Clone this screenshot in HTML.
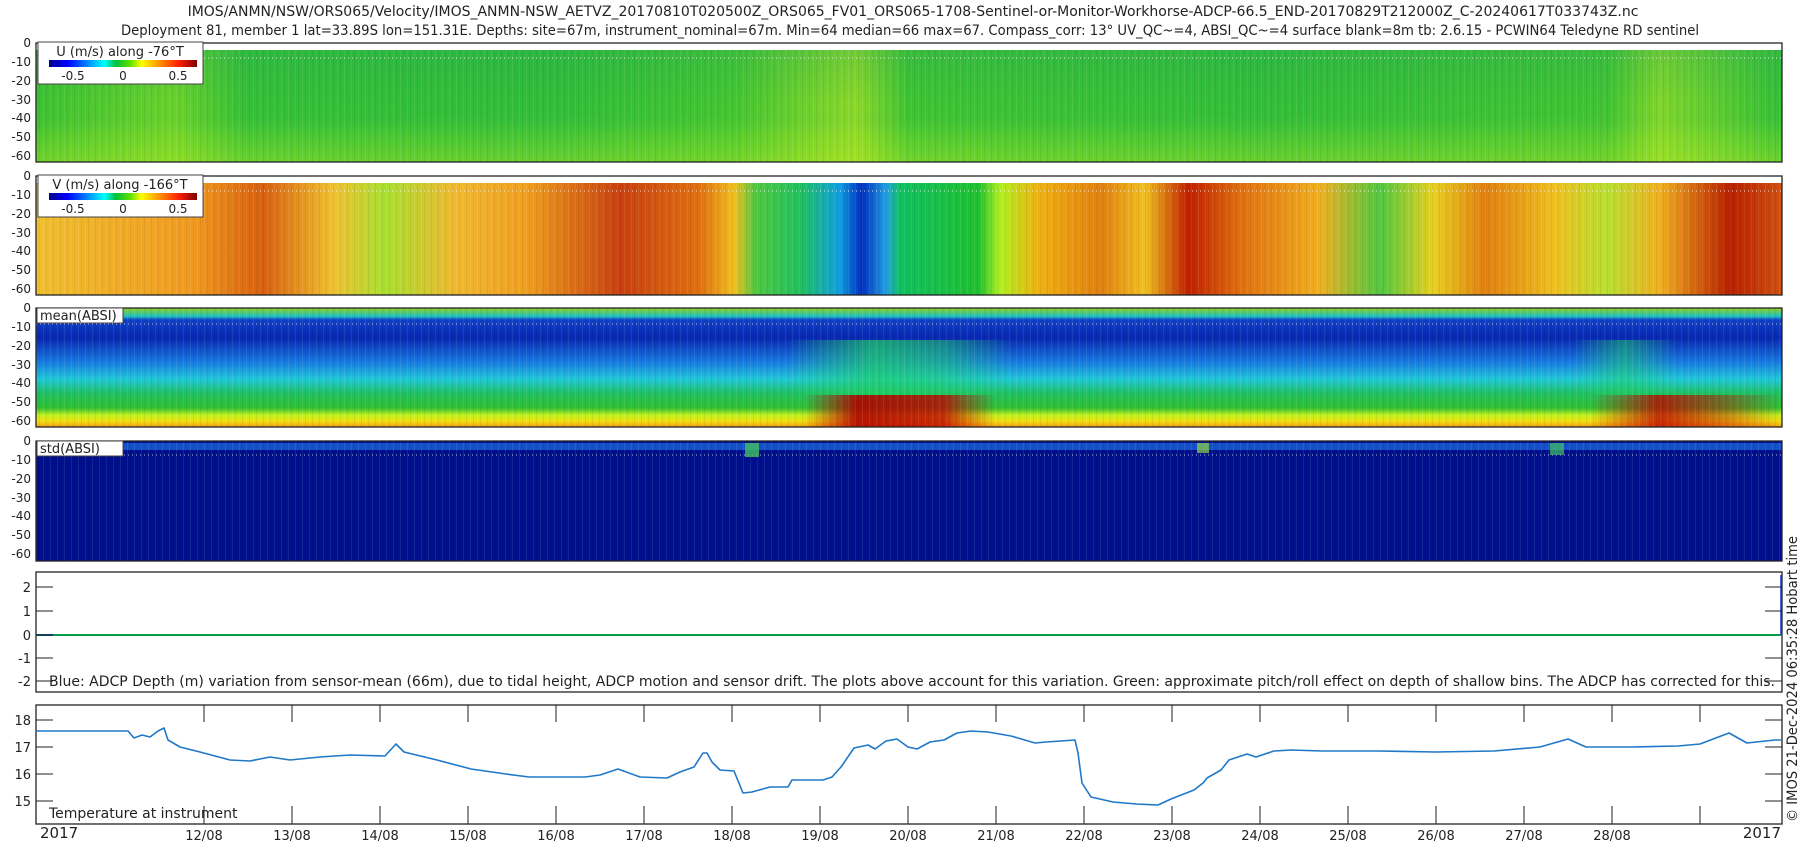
<!DOCTYPE html>
<html><head><meta charset="utf-8"><style>
html,body{margin:0;padding:0;background:#fff;width:1800px;height:850px;overflow:hidden}
svg{display:block}
text{font-family:"DejaVu Sans","Liberation Sans",sans-serif;fill:#222}
</style></head><body>
<svg width="1800" height="850" viewBox="0 0 1800 850" xmlns="http://www.w3.org/2000/svg">
<defs>
<linearGradient id="jet" x1="0" x2="1" y1="0" y2="0">
<stop offset="0" stop-color="#00008f"/><stop offset="0.125" stop-color="#0000ff"/><stop offset="0.375" stop-color="#00ffff"/><stop offset="0.45" stop-color="#00c040"/><stop offset="0.55" stop-color="#60e000"/><stop offset="0.625" stop-color="#ffff00"/><stop offset="0.875" stop-color="#ff2000"/><stop offset="1" stop-color="#800000"/>
</linearGradient>
<linearGradient id="uh" x1="36" x2="1782" gradientUnits="userSpaceOnUse">
<stop offset="0" stop-color="#3cc232"/><stop offset="0.08" stop-color="#6ad22a"/><stop offset="0.12" stop-color="#34c036"/><stop offset="0.3" stop-color="#30be38"/><stop offset="0.4" stop-color="#44c630"/><stop offset="0.47" stop-color="#8cd828"/><stop offset="0.5" stop-color="#3ec432"/><stop offset="0.7" stop-color="#32be38"/><stop offset="0.9" stop-color="#40c432"/><stop offset="0.93" stop-color="#80d62a"/><stop offset="1" stop-color="#34c036"/>
</linearGradient>
<linearGradient id="uv" x1="0" x2="0" y1="0" y2="1">
<stop offset="0" stop-color="#20a060" stop-opacity="0.25"/><stop offset="0.5" stop-color="#20a060" stop-opacity="0"/><stop offset="0.75" stop-color="#c0f020" stop-opacity="0.15"/><stop offset="1" stop-color="#d0f020" stop-opacity="0.35"/>
</linearGradient>
<linearGradient id="vh" x1="36" x2="1782" gradientUnits="userSpaceOnUse">
<stop offset="0" stop-color="#f0c030"/><stop offset="0.09" stop-color="#f09a20"/><stop offset="0.13" stop-color="#d86010"/><stop offset="0.17" stop-color="#f0c030"/><stop offset="0.2" stop-color="#a8e030"/><stop offset="0.24" stop-color="#f0b830"/><stop offset="0.28" stop-color="#f0a020"/><stop offset="0.335" stop-color="#c84010"/><stop offset="0.38" stop-color="#e07010"/><stop offset="0.4" stop-color="#f0c020"/><stop offset="0.412" stop-color="#50c840"/><stop offset="0.438" stop-color="#20c060"/><stop offset="0.46" stop-color="#10a0e0"/><stop offset="0.473" stop-color="#0030c0"/><stop offset="0.487" stop-color="#20a0e0"/><stop offset="0.495" stop-color="#10c060"/><stop offset="0.54" stop-color="#20c030"/><stop offset="0.552" stop-color="#b0f020"/><stop offset="0.575" stop-color="#f0b010"/><stop offset="0.61" stop-color="#e08010"/><stop offset="0.635" stop-color="#f0c020"/><stop offset="0.66" stop-color="#c02000"/><stop offset="0.69" stop-color="#e07010"/><stop offset="0.735" stop-color="#f0b020"/><stop offset="0.77" stop-color="#50c840"/><stop offset="0.8" stop-color="#e8d020"/><stop offset="0.83" stop-color="#e08010"/><stop offset="0.87" stop-color="#f0c020"/><stop offset="0.9" stop-color="#b8e030"/><stop offset="0.93" stop-color="#f0b020"/><stop offset="0.97" stop-color="#b82000"/><stop offset="1" stop-color="#d05010"/>
</linearGradient>
<linearGradient id="mv" x1="0" x2="0" y1="0" y2="1">
<stop offset="0" stop-color="#90d020"/><stop offset="0.07" stop-color="#20c0c0"/><stop offset="0.1" stop-color="#1040c8"/><stop offset="0.25" stop-color="#0828b0"/><stop offset="0.45" stop-color="#1878e0"/><stop offset="0.6" stop-color="#20c8d8"/><stop offset="0.72" stop-color="#20c060"/><stop offset="0.84" stop-color="#30c030"/><stop offset="0.9" stop-color="#c0f020"/><stop offset="0.95" stop-color="#f0e010"/><stop offset="1" stop-color="#f0a010"/>
</linearGradient>
<linearGradient id="mh" x1="36" x2="1782" gradientUnits="userSpaceOnUse">
<stop offset="0" stop-color="#c00000" stop-opacity="0"/><stop offset="0.44" stop-color="#c00000" stop-opacity="0"/><stop offset="0.47" stop-color="#b00000" stop-opacity="0.9"/><stop offset="0.52" stop-color="#c00000" stop-opacity="0.8"/><stop offset="0.55" stop-color="#c00000" stop-opacity="0"/><stop offset="0.89" stop-color="#c00000" stop-opacity="0"/><stop offset="0.93" stop-color="#c00000" stop-opacity="0.8"/><stop offset="0.97" stop-color="#c00000" stop-opacity="0.4"/><stop offset="1" stop-color="#c00000" stop-opacity="0"/>
</linearGradient>
<linearGradient id="mh2" x1="36" x2="1782" gradientUnits="userSpaceOnUse">
<stop offset="0" stop-color="#20d060" stop-opacity="0"/><stop offset="0.43" stop-color="#20d060" stop-opacity="0"/><stop offset="0.48" stop-color="#20d060" stop-opacity="0.7"/><stop offset="0.52" stop-color="#20d060" stop-opacity="0.5"/><stop offset="0.56" stop-color="#20d060" stop-opacity="0"/><stop offset="0.88" stop-color="#20d060" stop-opacity="0"/><stop offset="0.91" stop-color="#20d060" stop-opacity="0.5"/><stop offset="0.94" stop-color="#20d060" stop-opacity="0"/>
</linearGradient>
<pattern id="stripes" width="7" height="10" patternUnits="userSpaceOnUse">
<rect x="1" width="1" height="10" fill="#fff" opacity="0.08"/><rect x="4" width="1" height="10" fill="#000" opacity="0.06"/>
</pattern>
</defs>

<text x="913" y="16" font-size="14" text-anchor="middle">IMOS/ANMN/NSW/ORS065/Velocity/IMOS_ANMN-NSW_AETVZ_20170810T020500Z_ORS065_FV01_ORS065-1708-Sentinel-or-Monitor-Workhorse-ADCP-66.5_END-20170829T212000Z_C-20240617T033743Z.nc</text>
<text x="910" y="35" font-size="14" text-anchor="middle" textLength="1578" lengthAdjust="spacingAndGlyphs">Deployment 81, member 1 lat=33.89S lon=151.31E. Depths: site=67m, instrument_nominal=67m. Min=64 median=66 max=67. Compass_corr: 13° UV_QC~=4, ABSI_QC~=4 surface blank=8m tb: 2.6.15 - PCWIN64 Teledyne RD sentinel</text>

<rect x="36" y="50" width="1746" height="112" fill="url(#uh)"/>
<rect x="36" y="50" width="1746" height="112" fill="url(#uv)"/>
<rect x="36" y="50" width="1746" height="112" fill="url(#stripes)"/>
<line x1="36" y1="58" x2="1782" y2="58" stroke="#fff" stroke-dasharray="1 3" opacity="0.8"/>
<rect x="36" y="43" width="1746" height="119" fill="none" stroke="#222" stroke-width="1.3"/>
<rect x="38" y="42" width="165" height="42" fill="#fff" stroke="#444"/>
<text x="120" y="56" font-size="13" text-anchor="middle">U (m/s) along -76°T</text>
<rect x="49" y="60" width="148" height="7" fill="url(#jet)"/>
<text x="73" y="80" font-size="12" text-anchor="middle">-0.5</text><text x="123" y="80" font-size="12" text-anchor="middle">0</text><text x="178" y="80" font-size="12" text-anchor="middle">0.5</text>

<rect x="36" y="183" width="1746" height="112" fill="url(#vh)"/>
<rect x="36" y="183" width="1746" height="112" fill="url(#stripes)"/>
<line x1="36" y1="191" x2="1782" y2="191" stroke="#fff" stroke-dasharray="1 3" opacity="0.8"/>
<rect x="36" y="176" width="1746" height="119" fill="none" stroke="#222" stroke-width="1.3"/>
<rect x="38" y="175" width="165" height="42" fill="#fff" stroke="#444"/>
<text x="120" y="189" font-size="13" text-anchor="middle">V (m/s) along -166°T</text>
<rect x="49" y="193" width="148" height="7" fill="url(#jet)"/>
<text x="73" y="213" font-size="12" text-anchor="middle">-0.5</text><text x="123" y="213" font-size="12" text-anchor="middle">0</text><text x="178" y="213" font-size="12" text-anchor="middle">0.5</text>

<rect x="36" y="308" width="1746" height="119" fill="url(#mv)"/>
<rect x="36" y="340" width="1746" height="60" fill="url(#mh2)"/>
<rect x="36" y="395" width="1746" height="32" fill="url(#mh)"/>
<rect x="36" y="308" width="1746" height="119" fill="url(#stripes)"/>
<line x1="36" y1="324" x2="1782" y2="324" stroke="#fff" stroke-dasharray="1 3" opacity="0.7"/>
<rect x="36" y="308" width="1746" height="119" fill="none" stroke="#222" stroke-width="1.3"/>
<rect x="37" y="308" width="86" height="15" fill="#fff" stroke="#444"/>
<text x="40" y="320" font-size="13">mean(ABSI)</text>

<rect x="36" y="441" width="1746" height="120" fill="#000f8c"/>
<rect x="36" y="443" width="1746" height="7" fill="#1a60d8" opacity="0.8"/>
<rect x="36" y="441" width="1746" height="120" fill="url(#stripes)"/>
<line x1="36" y1="455" x2="1782" y2="455" stroke="#fff" stroke-dasharray="1 3" opacity="0.7"/>
<rect x="745" y="443" width="14" height="14" fill="#40c060" opacity="0.8"/>
<rect x="1550" y="443" width="14" height="12" fill="#40c060" opacity="0.7"/>
<rect x="1197" y="443" width="12" height="10" fill="#90d040" opacity="0.7"/>
<rect x="36" y="441" width="1746" height="120" fill="none" stroke="#222" stroke-width="1.3"/>
<rect x="37" y="441" width="86" height="15" fill="#fff" stroke="#444"/>
<text x="40" y="453" font-size="13">std(ABSI)</text>

<g font-size="12" text-anchor="end">
<text x="31" y="47">0</text><text x="31" y="66">-10</text><text x="31" y="85">-20</text><text x="31" y="104">-30</text><text x="31" y="122">-40</text><text x="31" y="141">-50</text><text x="31" y="160">-60</text>
<text x="31" y="180">0</text><text x="31" y="199">-10</text><text x="31" y="218">-20</text><text x="31" y="237">-30</text><text x="31" y="255">-40</text><text x="31" y="274">-50</text><text x="31" y="293">-60</text>
<text x="31" y="312">0</text><text x="31" y="331">-10</text><text x="31" y="350">-20</text><text x="31" y="369">-30</text><text x="31" y="387">-40</text><text x="31" y="406">-50</text><text x="31" y="425">-60</text>
<text x="31" y="445">0</text><text x="31" y="464">-10</text><text x="31" y="483">-20</text><text x="31" y="502">-30</text><text x="31" y="520">-40</text><text x="31" y="539">-50</text><text x="31" y="558">-60</text>
</g>

<rect x="36" y="572" width="1746" height="120" fill="none" stroke="#222" stroke-width="1.3"/>
<line x1="36" y1="635" x2="1782" y2="635" stroke="#1030c0" stroke-width="2"/>
<line x1="36" y1="635" x2="1782" y2="635" stroke="#00e000" stroke-width="1.2"/>
<line x1="1781" y1="575" x2="1781" y2="635" stroke="#1030e0" stroke-width="1.5"/>
<g stroke="#222" stroke-width="1">
<line x1="36" y1="587" x2="53" y2="587"/><line x1="36" y1="611" x2="53" y2="611"/><line x1="36" y1="635" x2="53" y2="635"/><line x1="36" y1="658" x2="53" y2="658"/><line x1="36" y1="681" x2="53" y2="681"/>
<line x1="1765" y1="587" x2="1782" y2="587"/><line x1="1765" y1="611" x2="1782" y2="611"/><line x1="1765" y1="658" x2="1782" y2="658"/><line x1="1765" y1="681" x2="1782" y2="681"/>
</g>
<g font-size="13" text-anchor="end">
<text x="31" y="592">2</text><text x="31" y="616">1</text><text x="31" y="640">0</text><text x="31" y="663">-1</text><text x="31" y="686">-2</text>
</g>
<text x="49" y="686" font-size="14" textLength="1726" lengthAdjust="spacingAndGlyphs">Blue: ADCP Depth (m) variation from sensor-mean (66m), due to tidal height, ADCP motion and sensor drift. The plots above account for this variation. Green: approximate pitch/roll effect on depth of shallow bins. The ADCP has corrected for this.</text>

<rect x="36" y="705" width="1746" height="119" fill="none" stroke="#222" stroke-width="1.3"/>
<g stroke="#222" stroke-width="1">
<line x1="36" y1="720" x2="53" y2="720"/><line x1="36" y1="747" x2="53" y2="747"/><line x1="36" y1="774" x2="53" y2="774"/><line x1="36" y1="801" x2="53" y2="801"/>
<line x1="1765" y1="720" x2="1782" y2="720"/><line x1="1765" y1="747" x2="1782" y2="747"/><line x1="1765" y1="774" x2="1782" y2="774"/><line x1="1765" y1="801" x2="1782" y2="801"/>
</g>
<g stroke="#222" stroke-width="1">
<path d="M204 705v17M292 705v17M380 705v17M468 705v17M556 705v17M644 705v17M732 705v17M820 705v17M908 705v17M996 705v17M1084 705v17M1172 705v17M1260 705v17M1348 705v17M1436 705v17M1524 705v17M1612 705v17M1700 705v17
M204 824v-18M292 824v-18M380 824v-18M468 824v-18M556 824v-18M644 824v-18M732 824v-18M820 824v-18M908 824v-18M996 824v-18M1084 824v-18M1172 824v-18M1260 824v-18M1348 824v-18M1436 824v-18M1524 824v-18M1612 824v-18M1700 824v-18"/>
</g>
<g font-size="13" text-anchor="end">
<text x="31" y="725">18</text><text x="31" y="752">17</text><text x="31" y="779">16</text><text x="31" y="806">15</text>
</g>
<polyline fill="none" stroke="#1f78c8" stroke-width="1.6" stroke-linejoin="round" points="36,731 128,731 134,738 142,735 150,737 158,731 164,728 168,740 180,747 200,752 230,760 250,761 270,757 290,760 320,757 350,755 385,756 396,744 404,752 437,760 471,769 506,774 529,777 585,777 600,775 618,769 640,777 667,778 680,772 694,767 703,753 707,753 712,762 720,770 734,771 743,793 752,792 770,787 788,787 792,780 823,780 832,777 841,767 854,748 868,745 875,749 886,741 897,739 908,747 917,749 930,742 944,740 957,733 971,731 988,732 1011,736 1035,743 1046,742 1075,740 1078,753 1082,783 1091,797 1113,802 1136,804 1158,805 1171,799 1194,790 1203,783 1207,778 1221,770 1229,760 1247,754 1256,757 1274,751 1292,750 1321,751 1379,751 1436,752 1494,751 1540,747 1568,739 1586,747 1632,747 1678,746 1700,744 1729,733 1747,743 1775,740 1782,740"/>
<text x="49" y="818" font-size="14">Temperature at instrument</text>

<text x="40" y="838" font-size="15">2017</text>
<text x="1781" y="838" font-size="15" text-anchor="end">2017</text>
<g font-size="13" text-anchor="middle">
<text x="204" y="840">12/08</text><text x="292" y="840">13/08</text><text x="380" y="840">14/08</text><text x="468" y="840">15/08</text><text x="556" y="840">16/08</text><text x="644" y="840">17/08</text><text x="732" y="840">18/08</text><text x="820" y="840">19/08</text><text x="908" y="840">20/08</text><text x="996" y="840">21/08</text><text x="1084" y="840">22/08</text><text x="1172" y="840">23/08</text><text x="1260" y="840">24/08</text><text x="1348" y="840">25/08</text><text x="1436" y="840">26/08</text><text x="1524" y="840">27/08</text><text x="1612" y="840">28/08</text>
</g>
<text transform="translate(1797,822) rotate(-90)" font-size="14" textLength="286" lengthAdjust="spacingAndGlyphs">© IMOS 21-Dec-2024 06:35:28 Hobart time</text>
</svg>
</body></html>
